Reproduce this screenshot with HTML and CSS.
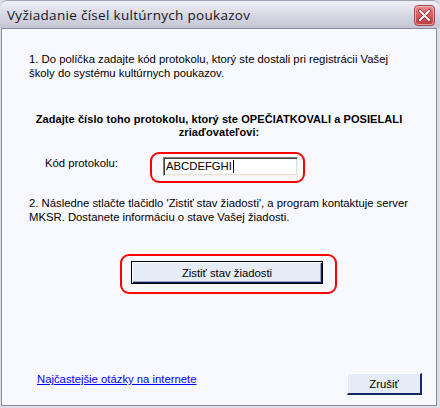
FILE: index.html
```html
<!DOCTYPE html>
<html lang="sk">
<head>
<meta charset="utf-8">
<title>Vyžiadanie čísel kultúrnych poukazov</title>
<link rel="stylesheet" href="styles.css">
</head>
<body>
<div class="window">
  <div class="titlebar">
    <span class="title">Vyžiadanie čísel kultúrnych poukazov</span>
    <span class="close" aria-label="Zavrieť">
      <svg width="21" height="21" viewBox="0 0 21 21">
        <defs>
          <linearGradient id="cg" x1="0" y1="0" x2="0" y2="1">
            <stop offset="0" stop-color="#e99393"/>
            <stop offset="0.5" stop-color="#d45a60"/>
            <stop offset="1" stop-color="#bd3a42"/>
          </linearGradient>
        </defs>
        <rect x="0.5" y="0.5" width="20" height="20" rx="3.5" fill="url(#cg)" stroke="#9c4a50"/>
        <rect x="1.5" y="1.5" width="18" height="18" rx="2.5" fill="none" stroke="#f3c6c6" stroke-opacity="0.7"/>
        <path d="M6 6L15 15M15 6L6 15" stroke="#8a2a30" stroke-width="3.6" stroke-linecap="square"/>
        <path d="M6 6L15 15M15 6L6 15" stroke="#ffffff" stroke-width="2" stroke-linecap="square"/>
      </svg>
    </span>
  </div>
  <div class="client">
    <p class="step">1. Do políčka zadajte kód protokolu, ktorý ste dostali pri registrácii Vašej<br>školy do systému kultúrnych poukazov.</p>
    <p class="notice">Zadajte číslo toho protokolu, ktorý ste OPEČIATKOVALI a POSIELALI<br>zriaďovateľovi:</p>
    <div class="code-row">
      <span class="code-label">Kód protokolu:</span>
      <div class="highlight highlight-input">
        <div class="textbox">ABCDEFGHI<span class="caret"></span></div>
      </div>
    </div>
    <p class="step step-two">2. Následne stlačte tlačidlo 'Zistiť stav žiadosti', a program kontaktuje server<br>MKSR. Dostanete informáciu o stave Vašej žiadosti.</p>
    <div class="highlight highlight-button">
      <button class="btn btn-default" type="button">Zistiť stav žiadosti</button>
    </div>
    <div class="footer">
      <a class="faq" href="#">Najčastejšie otázky na internete</a>
      <button class="btn btn-cancel" type="button">Zrušiť</button>
    </div>
  </div>
</div>
</body>
</html>
```

FILE: styles.css
```css
* {
  box-sizing: border-box;
}

html,
body {
  margin: 0;
  padding: 0;
}

body {
  width: 440px;
  height: 408px;
  overflow: hidden;
  background: #dcdce6;
  font-family: "Liberation Sans", Arial, sans-serif;
  font-size: 11.3px;
  color: #000;
}

.window {
  width: 440px;
  height: 408px;
  display: flex;
  flex-direction: column;
  background: #dedee8;
  border-radius: 7px 7px 0 0;
  overflow: hidden;
}

.titlebar {
  flex: none;
  height: 28px;
  display: flex;
  align-items: flex-start;
  justify-content: space-between;
  padding: 0 5px 0 7px;
  border-top: 1px solid #a0a0b0;
  border-radius: 7px 7px 0 0;
  background: linear-gradient(to bottom, #f0f0f6 0%, #e0e0ea 35%, #d0d0de 70%, #c4c4d4 100%);
}

.title {
  margin-top: 5px;
  font-family: "Open Sans", "DejaVu Sans", sans-serif;
  font-size: 13.5px;
  letter-spacing: 0.3px;
  line-height: 19px;
  color: #16162a;
  white-space: nowrap;
}

.close {
  margin-top: 4px;
  width: 21px;
  height: 21px;
  display: block;
}

.close svg {
  display: block;
}

.client {
  flex: 1;
  margin: 0 3px 2px 1px;
  border: 1px solid #8a8a9c;
  background: #f8f8ff;
  display: flex;
  flex-direction: column;
  padding-top: 23px;
}

.step {
  margin: 0;
  padding-left: 27px;
  line-height: 14px;
  white-space: nowrap;
}

.notice {
  margin: 33px 0 0;
  text-align: center;
  font-weight: bold;
  font-size: 11px;
  letter-spacing: 0.08px;
  line-height: 13px;
  white-space: nowrap;
}

.code-row {
  display: flex;
  align-items: flex-start;
  margin-top: 13px;
}

.code-label {
  flex: none;
  width: 105px;
  margin-left: 43px;
  margin-top: 4px;
  line-height: 14px;
}

.highlight {
  border: 2px solid #ff0000;
  border-radius: 9px;
}

.highlight-input {
  flex: none;
  width: 155px;
  height: 31px;
  padding: 3px 5px 0 11px;
}

.textbox {
  width: 135px;
  height: 19px;
  background: #fff;
  border-top: 1px solid #808080;
  border-left: 1px solid #808080;
  border-right: 1px solid #f4f2ea;
  border-bottom: 1px solid #f4f2ea;
  box-shadow: inset 1px 1px 0 #404040, inset -1px -1px 0 #e4e0d4;
  padding-left: 2px;
  line-height: 17px;
  white-space: nowrap;
}

.caret {
  display: inline-block;
  width: 1px;
  height: 13px;
  margin-left: 1px;
  background: #000;
  vertical-align: -3px;
}

.step-two {
  margin-top: 13px;
}

.highlight-button {
  align-self: flex-start;
  margin: 30px 0 0 118px;
  width: 217px;
  height: 40px;
  padding: 5px 0 0 9px;
}

.btn {
  font-family: "Liberation Sans", Arial, sans-serif;
  font-size: 11.3px;
  color: #000;
  background: #e6ecf8;
  margin: 0;
  padding: 0;
  cursor: default;
}

.btn-default {
  width: 192px;
  height: 23px;
  border: 1px solid #000;
  box-shadow: inset 1px 1px 0 #ffffff, inset -1px -1px 0 #0c1e5c, inset -2px -2px 0 #9aa6c8;
}

.footer {
  margin-top: auto;
  display: flex;
  justify-content: space-between;
  align-items: flex-start;
  padding: 0 14px 10px 35px;
}

.faq {
  color: #0000ff;
  text-decoration: underline;
  line-height: 14px;
  white-space: nowrap;
}

.btn-cancel {
  width: 75px;
  height: 22px;
  margin-top: 1px;
  border-style: solid;
  border-width: 1px 2px 2px 1px;
  border-color: #ffffff #17276a #17276a #ffffff;
}
```
